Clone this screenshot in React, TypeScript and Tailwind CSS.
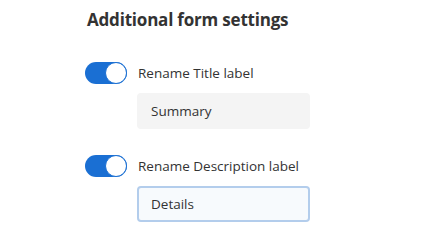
import { useState } from 'react'

function Toggle({ on }: { on: boolean }) {
  return (
    <div
      className={`relative w-[42px] h-[22px] rounded-full shrink-0 ${on ? 'bg-[#1a6fd3]' : 'bg-gray-300'}`}
    >
      <div className="absolute right-0 top-0 w-[22px] h-[22px] rounded-full bg-white border-[1.5px] border-[#1a6fd3]" />
    </div>
  )
}

export default function App() {
  const [title, setTitle] = useState('Summary')
  const [desc, setDesc] = useState('Details')

  return (
    <div className="w-[425px] h-[233px] bg-white font-['Open_Sans',sans-serif] text-[#333]">
      <div className="pl-[87px] pt-[8px]">
        <h2 className="text-[17px] font-bold tracking-[-0.2px] leading-[24px]">Additional form settings</h2>

        <div className="mt-[30px] flex items-center gap-[11px] -ml-[2px]">
          <Toggle on />
          <span className="text-[13.5px] leading-[18px]">Rename Title label</span>
        </div>
        <input
          value={title}
          onChange={(e) => setTitle(e.target.value)}
          className="mt-[9px] ml-[50px] block w-[173px] h-[36px] rounded-[4px] bg-[#f4f4f4] px-[14px] text-[13.5px] outline-none"
        />

        <div className="mt-[26px] flex items-center gap-[11px] -ml-[2px]">
          <Toggle on />
          <span className="text-[13.5px] leading-[18px]">Rename Description label</span>
        </div>
        <input
          value={desc}
          onChange={(e) => setDesc(e.target.value)}
          className="mt-[9px] ml-[50px] block w-[173px] h-[36px] rounded-[4px] bg-[#f7fafd] border-2 border-[#b3cdec] px-[12px] text-[13.5px] outline-none"
        />
      </div>
    </div>
  )
}
